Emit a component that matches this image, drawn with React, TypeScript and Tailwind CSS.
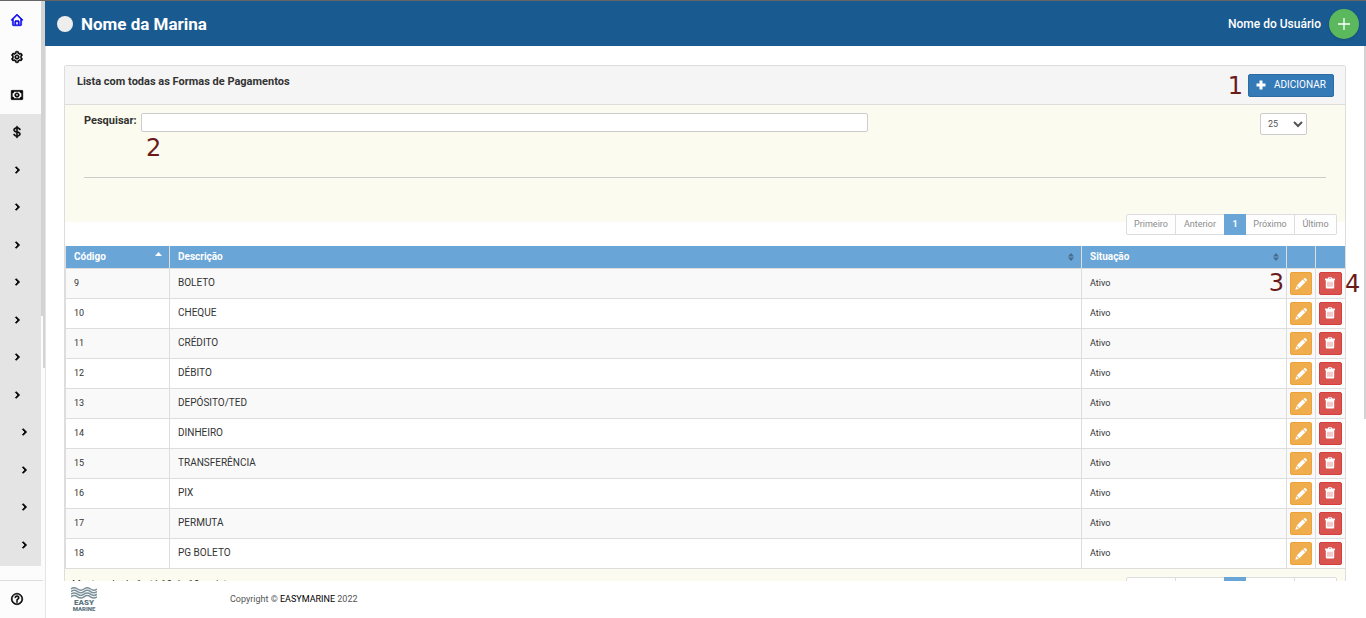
import React from 'react'
import { BiHome, BiCog, BiMoney, BiDollar, BiChevronRight, BiHelpCircle } from 'react-icons/bi'

const formas = [
  { codigo: 9, descricao: 'BOLETO' },
  { codigo: 10, descricao: 'CHEQUE' },
  { codigo: 11, descricao: 'CRÉDITO' },
  { codigo: 12, descricao: 'DÉBITO' },
  { codigo: 13, descricao: 'DEPÓSITO/TED' },
  { codigo: 14, descricao: 'DINHEIRO' },
  { codigo: 15, descricao: 'TRANSFERÊNCIA' },
  { codigo: 16, descricao: 'PIX' },
  { codigo: 17, descricao: 'PERMUTA' },
  { codigo: 18, descricao: 'PG BOLETO' },
]

const topItems = [
  { label: 'Início', icon: BiHome, color: 'text-[#0000ee]' },
  { label: 'Configurações', icon: BiCog, color: 'text-black' },
  { label: 'Caixa', icon: BiMoney, color: 'text-black' },
]

const Marker: React.FC<{ n: number; className: string }> = ({ n, className }) => (
  <span className={`absolute z-10 font-['DejaVu_Sans',sans-serif] text-2xl leading-6 font-normal text-[#6b1a1a] ${className}`}>{n}</span>
)

const PencilIcon = () => (
  <svg viewBox="0 0 12 12" className="w-3 h-3" fill="currentColor" aria-hidden="true">
    <path d="M8.300 1 9 .4a1.300 1.300 0 0 1 1.800 0l.8.8a1.300 1.300 0 0 1 0 1.800l-.7.7zM7.700 1.600l2.700 2.700-6 6-2.700-2.700zM1.200 8.200l2.600 2.600-3.400.9z" />
  </svg>
)

const TrashIcon = () => (
  <svg viewBox="0 0 12 12" className="w-3 h-3 mr-px mb-px" fill="currentColor" aria-hidden="true">
    <path fillRule="evenodd" d="M4 1.500V1Q4 .2 4.800 .2h2.400Q8 .2 8 1v.5h2.500q.5 0 .5.5v1.200H1V2q0-.5.5-.5zm1 0h2V1H5zM1.800 3.200h8.400V10.500q0 1-1 1H2.800q-1 0-1-1zM3.700 4.800v5h.6v-5zm2 0v5h.6v-5zm2 0v5h.6v-5z" />
  </svg>
)

const SortIcon = () => (
  <svg viewBox="0 0 6 8" className="w-1.5 h-2 text-[#486c8c]" fill="currentColor" aria-hidden="true">
    <path d="M3 0l3 3.500H0zM3 8L0 4.500h6z" />
  </svg>
)

const Logo = () => (
  <svg viewBox="0 0 26 24" className="w-[26px] h-6" role="img" aria-label="Easy Marine">
    <g fill="none" stroke="#7b9099" strokeWidth="1.500">
      <path d="M0 2q3.200-2.500 6.500 0t6.500 0 6.500 0 6.500 0" />
      <path d="M0 4.600q3.200-2.500 6.500 0t6.500 0 6.500 0 6.500 0" />
      <path d="M0 7.200q3.200-2.500 6.500 0t6.500 0 6.500 0 6.500 0" />
      <path d="M0 9.800q3.200-2.500 6.500 0t6.500 0 6.500 0 6.500 0" />
    </g>
    <text x="13" y="18" textAnchor="middle" fontFamily="Roboto, sans-serif" fontSize="8" fontWeight="900" fill="#5d757e">EASY</text>
    <text x="13" y="24" textAnchor="middle" fontFamily="Roboto, sans-serif" fontSize="6" fontWeight="900" fill="#5d757e">MARINE</text>
  </svg>
)

const Pagination = () => {
  const item = 'h-[21px] border border-[#ddd] bg-[#fefefe] pb-px text-[#8c8c8c]'
  return (
    <nav aria-label="Paginação" className="flex text-[9px] leading-3">
      <button className={`${item} w-[50px] rounded-l-xs`}>Primeiro</button>
      <button className={`${item} -ml-px w-[49px] border-r-0`}>Anterior</button>
      <button className="h-[21px] w-[22px] bg-[#6aa5d8] pb-px font-bold text-white">1</button>
      <button className={`${item} w-[49px] border-l-0`}>Próximo</button>
      <button className={`${item} w-[42px] rounded-r-xs border-l-0`}>Último</button>
    </nav>
  )
}

const Sidebar = () => (
  <aside className="relative flex w-[46px] shrink-0 flex-col justify-between border-r border-[#e4e4e4] bg-[#fcfcfc]">
    <nav aria-label="Menu" className="mr-1 flex flex-col">
      {topItems.map(({ label, icon: Icon, color }) => (
        <a key={label} href="#" aria-label={label} className={`flex h-[38px] items-center pb-px pl-[10px] even:h-[37px] ${color}`}>
          <Icon size={14} stroke="currentColor" strokeWidth={0.8} />
        </a>
      ))}
      <div className="bg-[#e4e4e4] pb-0.5">
        <a href="#" aria-label="Financeiro" className="flex h-[37px] items-center pb-px pl-[10px] text-black">
          <BiDollar size={14} stroke="currentColor" strokeWidth={0.8} />
        </a>
        {Array.from({ length: 11 }, (_, i) => (
          <a
            key={i}
            href="#"
            aria-label={`Submenu ${i + 1}`}
            className={`flex h-[37px] items-center pb-px text-black even:h-[38px] ${i < 7 ? 'pl-[10px]' : 'pl-[17px]'}`}
          >
            <BiChevronRight size={14} stroke="currentColor" strokeWidth={1.5} />
          </a>
        ))}
      </div>
    </nav>
    <div className="mr-0.5 flex h-[38px] items-center border-t border-[#ddd] pb-0.5 pl-[10px] text-black">
      <a href="#" aria-label="Ajuda">
        <BiHelpCircle size={14} stroke="currentColor" strokeWidth={0.8} />
      </a>
    </div>
    {/* scrollbar thumbs */}
    <div className="absolute top-0 right-0 h-[367px] w-0.5 bg-[#d3d3d3]" />
    <div className="absolute top-0 right-0 h-[315px] w-1 bg-[#d3d3d3]" />
  </aside>
)

const FormasTable = () => {
  const th = 'relative h-[23px] border-l border-b border-[#ddd] pr-[7px] pl-2 text-left font-bold'
  const td = 'h-[30px] border-l border-b border-[#ddd] px-2 pb-px'
  return (
    <table className="w-full table-fixed border-separate border-spacing-0 text-[10px] leading-3 text-[#333]">
      <colgroup>
        <col className="w-[104px]" />
        <col />
        <col className="w-[205px]" />
        <col className="w-[29px]" />
        <col className="w-[30px]" />
      </colgroup>
      <thead className="bg-[#6aa5d8] text-white">
        <tr>
          <th className={th}>
            <div className="flex items-center justify-between">
              Código
              <svg viewBox="0 0 7 4" className="mb-1.5 h-1 w-[7px]" fill="currentColor" aria-hidden="true">
                <path d="M3.500 0L7 4H0z" />
              </svg>
            </div>
          </th>
          <th className={th}>
            <div className="flex items-center justify-between">Descrição<SortIcon /></div>
          </th>
          <th className={th}>
            <div className="flex items-center justify-between">Situação<SortIcon /></div>
          </th>
          <th className={th} aria-label="Editar" />
          <th className={th} aria-label="Excluir" />
        </tr>
      </thead>
      <tbody>
        {formas.map((f, i) => (
          <tr key={f.codigo} className="bg-white odd:bg-[#f9f9f9]">
            <td className={`${td} text-[9px]`}>{f.codigo}</td>
            <td className={td}>{f.descricao}</td>
            <td className={`${td} relative text-[9px]`}>
              Ativo
              {i === 0 && <Marker n={3} className="top-0.5 right-0.5" />}
            </td>
            <td className="border-b border-l border-[#ddd] pl-[3px]">
              <button aria-label="Editar" className="flex h-[23px] w-[22px] items-center justify-center rounded-xs border border-[#eea236] bg-[#f0ad4e] text-white">
                <PencilIcon />
              </button>
            </td>
            <td className="relative border-b border-l border-[#ddd] pl-[3px]">
              <button aria-label="Excluir" className="flex h-[23px] w-[23px] items-center justify-center rounded-xs border border-[#d43f3a] bg-[#d9534f] text-white">
                <TrashIcon />
              </button>
              {i === 0 && <Marker n={4} className="top-[3px] left-full" />}
            </td>
          </tr>
        ))}
      </tbody>
    </table>
  )
}

export default function App() {
  return (
    <div className="flex h-screen overflow-hidden border-t border-[#666] bg-white font-[Roboto,sans-serif] text-[#333]">
      <Sidebar />
      <div className="relative flex min-w-0 flex-1 flex-col">
        <header className="-ml-px flex h-[45px] shrink-0 items-center bg-[#195a91] pr-[7px] pl-3 text-white">
          <span className="h-4 w-4 rounded-full bg-[#eee]" />
          <h1 className="ml-2 flex-1 text-[17px] leading-6 font-bold">Nome da Marina</h1>
          <span className="text-xs leading-5 font-medium">Nome do Usuário</span>
          <button aria-label="Novo" className="ml-2 flex h-[30px] w-[30px] items-center justify-center rounded-full bg-[#5cb85c] shadow">
            <svg viewBox="0 0 12 12" className="h-3 w-3" stroke="currentColor" strokeWidth="1.3" aria-hidden="true">
              <path d="M6 0v12M0 6h12" />
            </svg>
          </button>
        </header>

        <main className="min-h-0 flex-1 overflow-hidden pt-[19px] pr-5 pl-[18px]">
          <section className="rounded-t-xs border border-[#ddd]">
            <div className="relative flex h-[39px] justify-between border-b border-[#ddd] bg-[#f5f5f5] pt-2 pr-[11px] pl-3">
              <h2 className="text-[11px] leading-4 font-bold">Lista com todas as Formas de Pagamentos</h2>
              <div className="relative">
                <Marker n={1} className="top-0 right-full mr-[5px]" />
                <button className="flex h-[23px] w-[86px] items-center rounded-xs border border-[#2e6da4] bg-[#337ab7] pb-0.5 pl-[7px] text-[10px] leading-3 text-white">
                  <svg viewBox="0 0 10 10" className="mr-2 h-2.5 w-2.5" stroke="currentColor" strokeWidth="3" aria-hidden="true">
                    <path d="M5 .5v9M.5 5h9" />
                  </svg>
                  ADICIONAR
                </button>
              </div>
            </div>

            <div className="h-[117px] bg-[#fbfbef] px-[19px] pt-2">
              <div className="flex h-[65px] items-start justify-between border-b border-[#ccc] pr-[19px]">
                <div className="relative flex w-[784px] items-start">
                  <label htmlFor="pesquisar" className="mr-1 shrink-0 text-[11px] leading-4 font-bold">Pesquisar:</label>
                  <input id="pesquisar" type="text" className="h-[19px] min-w-0 flex-1 rounded-xs border border-[#ccc] bg-white px-1 text-[11px]" />
                  <Marker n={2} className="top-[23px] left-[62px]" />
                </div>
                <select aria-label="Registros por página" defaultValue="25" className="h-[22px] w-[47px] rounded-xs border border-[#ccc] bg-white pl-[3px] text-[9px] text-[#555]">
                  <option>10</option>
                  <option>25</option>
                  <option>50</option>
                </select>
              </div>
            </div>

            <div className="-mt-2 mb-[11px] flex justify-end pr-2">
              <Pagination />
            </div>

            <FormasTable />

            <div className="flex items-start justify-between bg-[#fbfbef] pt-2 pr-2 pb-2 pl-[7px]">
              <p className="pt-0.5 text-[10px] leading-3">Mostrando de 1 até 10 de 10 registros</p>
              <Pagination />
            </div>
          </section>
        </main>

        <footer className="flex h-[37px] shrink-0 items-center bg-white pb-0.5 pl-[25px]">
          <Logo />
          <p className="ml-[133px] text-[9px] leading-3 text-[#555]">
            Copyright © <a href="#" className="text-black">EASYMARINE</a> 2022
          </p>
        </footer>

        <div className="absolute top-[45px] right-0 h-[373px] w-0.5 bg-[#d3d3d3]" />
      </div>
    </div>
  )
}
